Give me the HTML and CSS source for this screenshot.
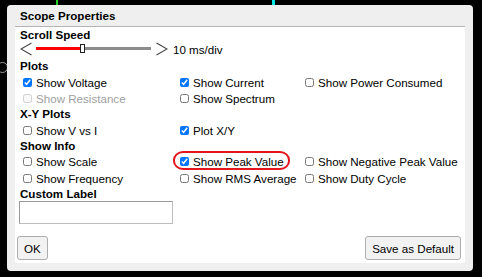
FILE: index.html
```html
<!DOCTYPE html>
<html lang="en">
<head>
    <meta charset="UTF-8">
    <meta name="viewport" content="width=device-width, initial-scale=1.0">
    <title>Scope Properties</title>
    <link rel="stylesheet" href="styles.css">
</head>
<body>
    <span class="trace trace-green"></span>
    <span class="trace trace-cyan"></span>
    <span class="probe"></span>

    <div class="dialog">
        <div class="dialog-title">Scope Properties</div>
        <div class="dialog-body">
            <div class="heading">Scroll Speed</div>
            <div class="speed-row">
                <svg class="chevron" width="12" height="14" viewBox="0 0 12 14"><polyline points="11.5,1 1,7 11.5,13"/></svg>
                <div class="speed-track">
                    <span class="speed-fill"></span>
                    <span class="speed-thumb"></span>
                    <span class="speed-rest"></span>
                </div>
                <svg class="chevron chevron-right" width="12" height="14" viewBox="0 0 12 14"><polyline points="0.5,1 11,7 0.5,13"/></svg>
                <span class="speed-value">10 ms/div</span>
            </div>

            <div class="heading">Plots</div>
            <div class="options">
                <label class="option"><input type="checkbox" checked>Show Voltage</label>
                <label class="option"><input type="checkbox" checked>Show Current</label>
                <label class="option"><input type="checkbox">Show Power Consumed</label>
                <label class="option disabled"><input type="checkbox" disabled>Show Resistance</label>
                <label class="option"><input type="checkbox">Show Spectrum</label>
            </div>

            <div class="heading">X-Y Plots</div>
            <div class="options">
                <label class="option"><input type="checkbox">Show V vs I</label>
                <label class="option"><input type="checkbox" checked>Plot X/Y</label>
            </div>

            <div class="heading">Show Info</div>
            <div class="options">
                <label class="option"><input type="checkbox">Show Scale</label>
                <label class="option"><input type="checkbox" checked>Show Peak Value<span class="mark"></span></label>
                <label class="option"><input type="checkbox">Show Negative Peak Value</label>
                <label class="option"><input type="checkbox">Show Frequency</label>
                <label class="option"><input type="checkbox">Show RMS Average</label>
                <label class="option"><input type="checkbox">Show Duty Cycle</label>
            </div>

            <div class="heading">Custom Label</div>
            <input class="label-input" type="text">

            <div class="buttons">
                <button class="btn">OK</button>
                <button class="btn">Save as Default</button>
            </div>
        </div>
    </div>
</body>
</html>
```

FILE: styles.css
```css
body {
    margin: 0;
    height: 277px;
    overflow: hidden;
    position: relative;
    background-color: #000;
    font-family: "Liberation Sans", Arial, sans-serif;
    font-size: 11.6px;
    color: #000;
}
.trace {
    position: absolute;
    top: 0;
    height: 10px;
}
.trace-green {
    left: 56px;
    width: 2px;
    background-color: #22cc22;
}
.trace-cyan {
    left: 272px;
    width: 3px;
    background-color: #00e4e4;
}
.probe {
    position: absolute;
    left: -3px;
    top: 62px;
    width: 9px;
    height: 9px;
    border: 1px solid #9a9a9a;
    border-radius: 50%;
}
.dialog {
    position: relative;
    z-index: 1;
    box-sizing: border-box;
    width: 466px;
    height: 266px;
    margin: 5px 0 0 7px;
    padding: 0 8px 8px;
    background-color: #efefef;
    border-radius: 4px;
}
.dialog-title {
    height: 21px;
    line-height: 21px;
    padding-left: 5px;
    font-weight: bold;
}
.dialog-body {
    height: 236px;
    padding: 0 5px;
    background-color: #fff;
    border-top: 1px solid #b4b4b4;
}
.heading {
    height: 15px;
    line-height: 15px;
    font-weight: bold;
}
.speed-row {
    display: flex;
    align-items: flex-start;
    height: 16px;
    line-height: 16px;
}
.chevron {
    display: block;
    flex: none;
}
.chevron polyline {
    fill: none;
    stroke: #444;
    stroke-width: 1.1;
}
.chevron-right {
    margin-left: 5px;
}
.speed-track {
    display: flex;
    align-items: center;
    width: 115px;
    height: 9px;
    margin: 2px 0 0 4px;
}
.speed-fill {
    width: 44px;
    height: 3px;
    background-color: #f00;
}
.speed-thumb {
    box-sizing: border-box;
    width: 5px;
    height: 9px;
    border: 1px solid #222;
    background-color: #fff;
}
.speed-rest {
    flex: 1;
    height: 3px;
    background-color: #8c8c8c;
}
.speed-value {
    margin-left: 5px;
}
.options {
    display: grid;
    grid-template-columns: 157px 125px 1fr;
    grid-auto-rows: 16.5px;
}
.option {
    position: relative;
    display: flex;
    align-items: flex-start;
    box-sizing: border-box;
    padding-top: 1.5px;
    line-height: 15px;
    white-space: nowrap;
}
.option input {
    width: 9px;
    height: 9px;
    margin: 3px 4px 0 3px;
    flex: none;
}
.option.disabled {
    color: #a0a0a0;
}
.mark {
    position: absolute;
    left: -4px;
    top: -2px;
    width: 117px;
    height: 19px;
    box-sizing: border-box;
    border: 2px solid #e3151d;
    border-radius: 10px / 9px;
}
.label-input {
    display: block;
    box-sizing: border-box;
    width: 154px;
    height: 23px;
    margin: 0.5px 0 0 -1px;
    padding: 0 3px;
    border: 1px solid;
    border-color: #9a9a9a #bdbdbd #bdbdbd #9a9a9a;
    font: inherit;
}
.buttons {
    display: flex;
    justify-content: space-between;
    margin: 12px -1px 0 -3px;
}
.btn {
    height: 24px;
    padding: 0 6px;
    border: 1px solid #adadad;
    border-radius: 3px;
    background-color: #f2f2f2;
    font: inherit;
    color: #000;
}
```
